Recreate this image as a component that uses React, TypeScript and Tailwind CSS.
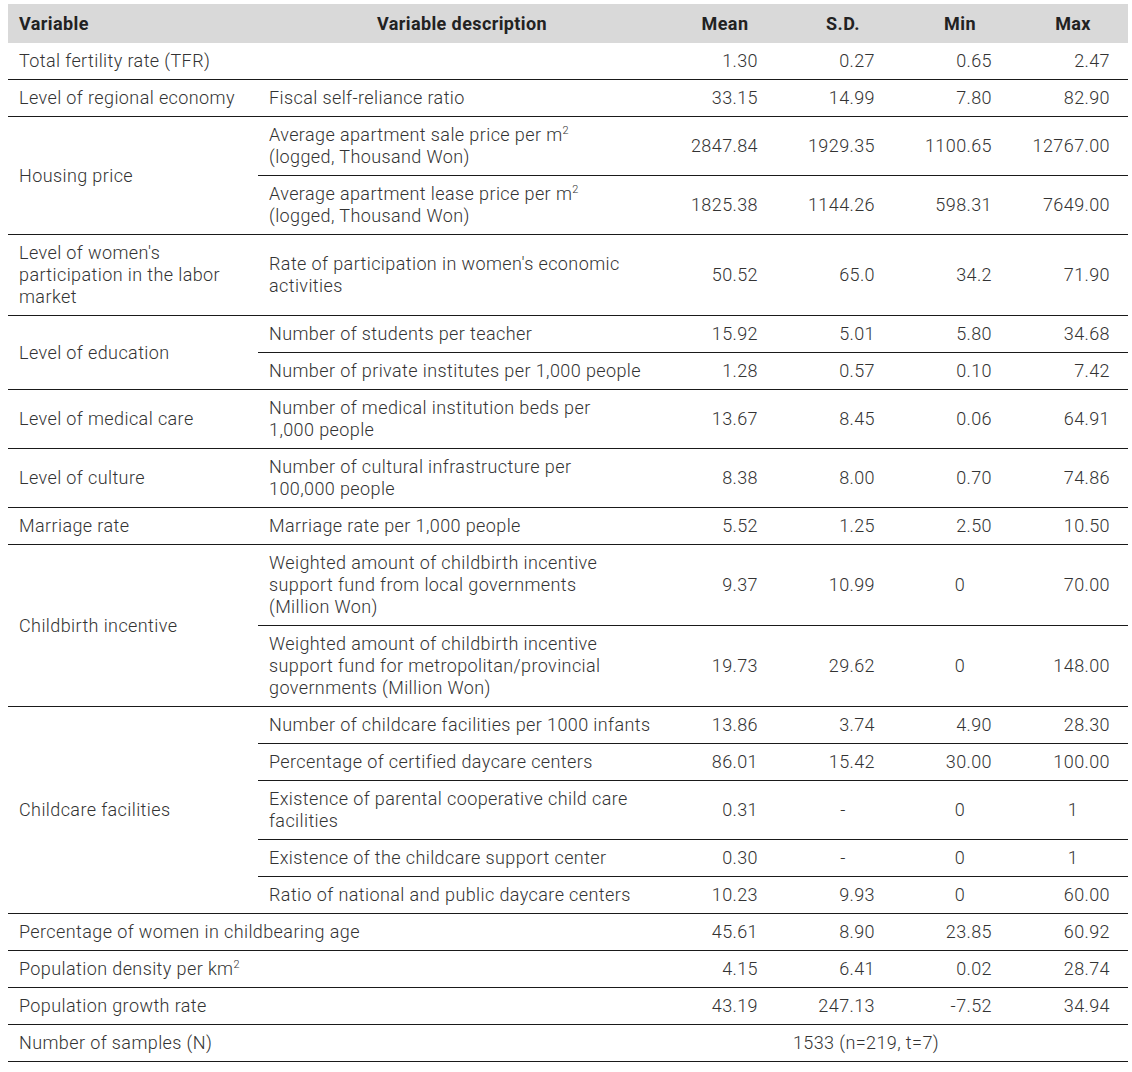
import React from 'react';

type Row = { desc?: React.ReactNode; vals: string[] };
type Group = { label: React.ReactNode; rows: Row[]; full?: boolean };

const M2 = () => (
  <>
    m<sup className="text-[11px] -top-[0.6em]">2</sup>
  </>
);

const groups: Group[] = [
  { label: 'Total fertility rate (TFR)', full: true, rows: [{ vals: ['1.30', '0.27', '0.65', '2.47'] }] },
  { label: 'Level of regional economy', rows: [{ desc: 'Fiscal self-reliance ratio', vals: ['33.15', '14.99', '7.80', '82.90'] }] },
  {
    label: 'Housing price',
    rows: [
      { desc: <>Average apartment sale price per <M2 /><br />(logged, Thousand Won)</>, vals: ['2847.84', '1929.35', '1100.65', '12767.00'] },
      { desc: <>Average apartment lease price per <M2 /><br />(logged, Thousand Won)</>, vals: ['1825.38', '1144.26', '598.31', '7649.00'] },
    ],
  },
  {
    label: <>Level of women's<br />participation in the labor<br />market</>,
    rows: [{ desc: <>Rate of participation in women's economic<br />activities</>, vals: ['50.52', '65.0', '34.2', '71.90'] }],
  },
  {
    label: 'Level of education',
    rows: [
      { desc: 'Number of students per teacher', vals: ['15.92', '5.01', '5.80', '34.68'] },
      { desc: 'Number of private institutes per 1,000 people', vals: ['1.28', '0.57', '0.10', '7.42'] },
    ],
  },
  { label: 'Level of medical care', rows: [{ desc: <>Number of medical institution beds per<br />1,000 people</>, vals: ['13.67', '8.45', '0.06', '64.91'] }] },
  { label: 'Level of culture', rows: [{ desc: <>Number of cultural infrastructure per<br />100,000 people</>, vals: ['8.38', '8.00', '0.70', '74.86'] }] },
  { label: 'Marriage rate', rows: [{ desc: 'Marriage rate per 1,000 people', vals: ['5.52', '1.25', '2.50', '10.50'] }] },
  {
    label: 'Childbirth incentive',
    rows: [
      { desc: <>Weighted amount of childbirth incentive<br />support fund from local governments<br />(Million Won)</>, vals: ['9.37', '10.99', '0', '70.00'] },
      { desc: <>Weighted amount of childbirth incentive<br />support fund for metropolitan/provincial<br />governments (Million Won)</>, vals: ['19.73', '29.62', '0', '148.00'] },
    ],
  },
  {
    label: 'Childcare facilities',
    rows: [
      { desc: 'Number of childcare facilities per 1000 infants', vals: ['13.86', '3.74', '4.90', '28.30'] },
      { desc: 'Percentage of certified daycare centers', vals: ['86.01', '15.42', '30.00', '100.00'] },
      { desc: <>Existence of parental cooperative child care<br />facilities</>, vals: ['0.31', '-', '0', '1'] },
      { desc: 'Existence of the childcare support center', vals: ['0.30', '-', '0', '1'] },
      { desc: 'Ratio of national and public daycare centers', vals: ['10.23', '9.93', '0', '60.00'] },
    ],
  },
  { label: 'Percentage of women in childbearing age', full: true, rows: [{ vals: ['45.61', '8.90', '23.85', '60.92'] }] },
  { label: <>Population density per k<M2 /></>, full: true, rows: [{ vals: ['4.15', '6.41', '0.02', '28.74'] }] },
  { label: 'Population growth rate', full: true, rows: [{ vals: ['43.19', '247.13', '-7.52', '34.94'] }] },
];

const padR = ['pr-[26px]', 'pr-[27px]', 'pr-[26px]', 'pr-[18px]'];
const cell = 'border-b border-[#1a1a1a] py-[7px] align-middle';

function ValueCells({ vals }: { vals: string[] }) {
  return (
    <>
      {vals.map((v, i) => (
        <td key={i} className={`${cell} ${v.includes('.') ? `text-right ${padR[i]}` : 'text-center'}`}>
          {v}
        </td>
      ))}
    </>
  );
}

export default function App() {
  return (
    <div className="bg-white min-h-[1072px] pt-[4px] pl-[8px]" style={{ fontFamily: 'Roboto, "Liberation Sans", sans-serif' }}>
      <table className="table-fixed border-collapse w-[1120px] text-[18px] leading-[22px] tracking-[0.4px] font-light text-[#333]">
        <colgroup>
          <col className="w-[250px]" />
          <col className="w-[408px]" />
          <col className="w-[118px]" />
          <col className="w-[118px]" />
          <col className="w-[116px]" />
          <col className="w-[110px]" />
        </colgroup>
        <thead>
          <tr className="bg-[#d9d9d9] text-[#222] font-semibold">
            <th className="text-left px-[11px] py-[8.5px]">Variable</th>
            <th className="text-center py-[8.5px]">Variable description</th>
            <th className="text-center py-[8.5px]">Mean</th>
            <th className="text-center py-[8.5px]">S.D.</th>
            <th className="text-center py-[8.5px]">Min</th>
            <th className="text-center py-[8.5px]">Max</th>
          </tr>
        </thead>
        <tbody>
          {groups.map((g, gi) =>
            g.full ? (
              <tr key={gi}>
                <td colSpan={2} className={`${cell} px-[11px] whitespace-nowrap`}>{g.label}</td>
                <ValueCells vals={g.rows[0].vals} />
              </tr>
            ) : (
              g.rows.map((r, ri) => (
                <tr key={`${gi}-${ri}`}>
                  {ri === 0 && (
                    <td rowSpan={g.rows.length} className={`${cell} px-[11px] whitespace-nowrap`}>
                      {g.label}
                    </td>
                  )}
                  <td className={`${cell} px-[11px] whitespace-nowrap`}>{r.desc}</td>
                  <ValueCells vals={r.vals} />
                </tr>
              ))
            )
          )}
          <tr>
            <td colSpan={2} className={`${cell} px-[11px]`}>Number of samples (N)</td>
            <td colSpan={4} className={`${cell} text-center pr-[62px]`}>1533 (n=219, t=7)</td>
          </tr>
        </tbody>
      </table>
    </div>
  );
}
